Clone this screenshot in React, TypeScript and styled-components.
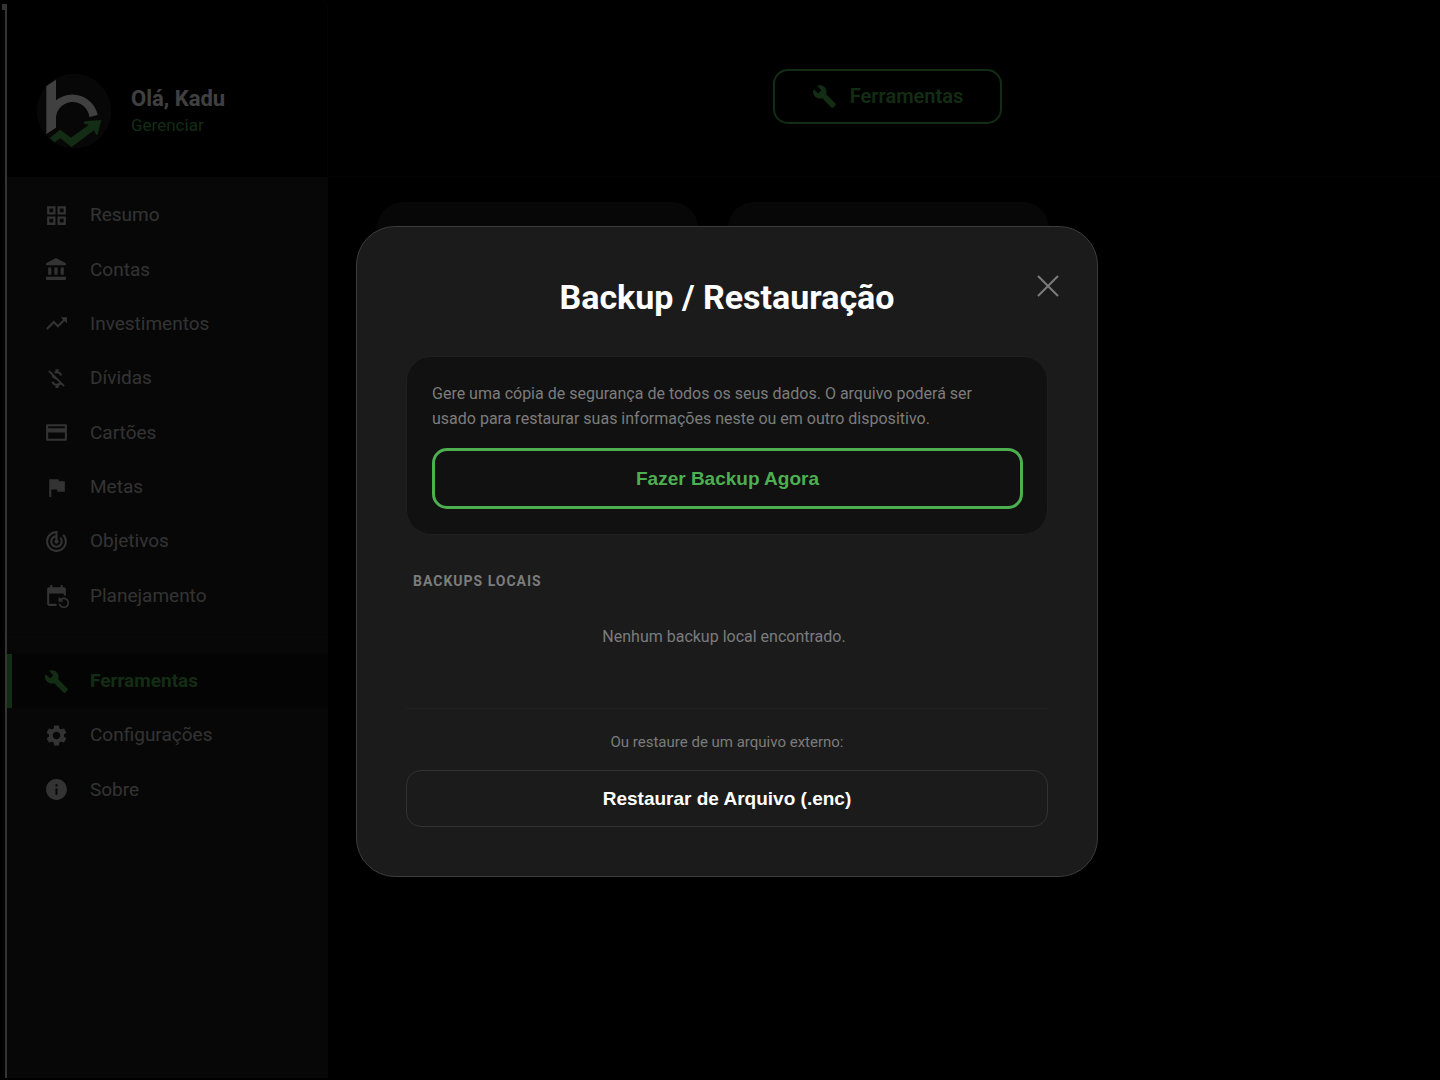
import React from "react";
import styled, { createGlobalStyle, css } from "styled-components";
import {
  MdBuild,
  MdEventRepeat,
  MdFlag,
  MdInfo,
  MdMoneyOff,
  MdSettings,
  MdTrackChanges,
  MdTrendingUp,
} from "react-icons/md";

const color = {
  page: "#000000",
  panel: "#1c1c1c",
  inset: "#111111",
  text: "#ffffff",
  muted: "#cacaca",
  hint: "#7c7c7c",
  accent: "#4caf50",
};

const GlobalStyle = createGlobalStyle`
  *, *::before, *::after { box-sizing: border-box; }
  body {
    margin: 0;
    background: ${color.page};
    color: ${color.text};
    font-family: Roboto, "Liberation Sans", sans-serif;
    overflow: hidden;
  }
  h1, h2, h3, p, ul { margin: 0; padding: 0; }
  ul { list-style: none; }
  button { font: inherit; color: inherit; cursor: pointer; }
`;

const Shell = styled.div`
  display: flex;
  height: 100vh;
  padding: 4px 0 2px 2px;
  overflow: hidden;
`;

const Rail = styled.div`
  flex: none;
  width: 5px;
  background: #0c0c0c;
  border-right: 2px solid #d0d0d0;

  &::before {
    content: "";
    display: block;
    height: 6px;
    background: #d0d0d0;
  }
`;

const AppFrame = styled.div`
  flex: none;
  width: 100vw;
  display: grid;
  grid-template-columns: 321px 1fr;
`;

const Sidebar = styled.aside`
  display: flex;
  flex-direction: column;
  background: ${color.panel};
`;

const Profile = styled.div`
  display: flex;
  align-items: center;
  gap: 20px;
  height: 173px;
  padding: 41px 30px 0;
  background: ${color.page};
  border-right: 1px solid ${color.inset};
`;

const Avatar = styled.svg`
  flex: none;
  width: 74px;
  height: 74px;
`;

const ProfileName = styled.h3`
  font-size: 22px;
  line-height: 28px;
  font-weight: 700;
`;

const ProfileLink = styled.a`
  display: block;
  font-size: 17px;
  line-height: 24px;
  color: ${color.accent};
  text-decoration: none;
`;

const Nav = styled.nav`
  padding: 11px 0;
`;

const NavList = styled.ul<{ $height: number }>`
  display: grid;
  grid-auto-rows: 1fr;
  min-height: ${(p) => p.$height}px;
`;

const NavDivider = styled.hr`
  height: 1px;
  margin: 14px 0 16px;
  border: 0;
  background: #242424;
`;

const NavLink = styled.a<{ $active?: boolean }>`
  display: flex;
  align-items: center;
  gap: 21px;
  height: 100%;
  padding: 0 32px;
  border-left: 5px solid transparent;
  font-size: 19px;
  line-height: 24px;
  color: ${color.muted};
  text-decoration: none;

  svg {
    flex: none;
    font-size: 25px;
  }

  ${(p) =>
    p.$active &&
    css`
      border-left-color: ${color.accent};
      background: ${color.inset};
      color: ${color.accent};
      font-weight: 700;
    `}
`;

const Main = styled.main`
  display: flex;
  flex-direction: column;
`;

const TopBar = styled.header`
  display: flex;
  align-items: center;
  justify-content: center;
  height: 173px;
  padding-top: 12px;
  border-bottom: 1px solid #080808;
`;

const PageTab = styled.button`
  display: flex;
  align-items: center;
  gap: 13px;
  height: 55px;
  padding: 0 37px;
  border: 2px solid ${color.accent};
  border-radius: 15px;
  background: none;
  color: ${color.accent};
  font-size: 20px;
  line-height: 24px;
  font-weight: 600;

  svg {
    font-size: 25px;
  }
`;

const ToolGrid = styled.div`
  display: grid;
  grid-template-columns: repeat(2, 321px);
  gap: 30px;
  padding: 25px 49px;
`;

const ToolCard = styled.div`
  min-height: 180px;
  border-radius: 26px;
  background: ${color.panel};
`;

const Backdrop = styled.div`
  position: fixed;
  inset: 0;
  display: grid;
  place-items: center;
  padding: 23px 0 0 14px;
  background: rgba(0, 0, 0, 0.75);
`;

const Dialog = styled.section`
  position: relative;
  width: 742px;
  max-width: 100%;
  padding: 48px 49px 49px;
  border: 1px solid #3c3c3c;
  border-radius: 39px;
  background: #1b1b1b;
`;

const DialogTitle = styled.h1`
  margin-bottom: 37px;
  font-size: 34px;
  line-height: 44px;
  font-weight: 700;
  text-align: center;
`;

const CloseButton = styled.button`
  position: absolute;
  top: 42px;
  right: 32px;
  display: grid;
  place-items: center;
  width: 34px;
  height: 34px;
  padding: 0;
  border: 0;
  background: none;
  color: ${color.hint};
`;

const BackupCard = styled.div`
  padding: 24px 24px 25px 25px;
  border: 1px solid #1f1f1f;
  border-radius: 25px;
  background: ${color.inset};
`;

const Description = styled.p`
  margin-bottom: 17px;
  padding-right: 24px;
  font-size: 16px;
  line-height: 25px;
  color: ${color.hint};
`;

const ActionButton = styled.button<{ $primary?: boolean }>`
  display: block;
  width: 100%;
  padding: 16px;
  border: 1px solid #333333;
  border-radius: 15px;
  background: none;
  font-family: "Liberation Sans", Arial, sans-serif;
  font-size: 19px;
  line-height: 23px;
  font-weight: 700;

  ${(p) =>
    p.$primary &&
    css`
      border: 3px solid ${color.accent};
      color: ${color.accent};
    `}
`;

const SectionLabel = styled.h2`
  margin: 37px 7px 35px;
  font-size: 14px;
  line-height: 18px;
  font-weight: 700;
  letter-spacing: 1px;
  text-transform: uppercase;
  color: ${color.hint};
`;

const EmptyList = styled.p`
  padding-right: 6px;
  font-size: 16px;
  line-height: 24px;
  text-align: center;
  color: ${color.hint};
`;

const RestoreArea = styled.div`
  margin-top: 59px;
  padding-top: 23px;
  border-top: 1px solid #202020;
`;

const RestoreHint = styled.p`
  margin-bottom: 18px;
  font-size: 15px;
  line-height: 20px;
  text-align: center;
  color: ${color.hint};
`;

type NavItem = { label: string; icon: React.ComponentType; active?: boolean };

function GlyphIcon({ d }: { d: string }) {
  return (
    <svg width="1em" height="1em" viewBox="0 0 24 24" fill="currentColor" aria-hidden="true">
      <path fillRule="evenodd" d={d} />
    </svg>
  );
}

const GridIcon = () => (
  <GlyphIcon d="M3 3h8v8H3zM5.200 5.200v3.600h3.600V5.200zM13 3h8v8h-8zM15.200 5.200v3.600h3.600V5.200zM3 13h8v8H3zM5.200 15.200v3.600h3.600v-3.600zM13 13h8v8h-8zM15.200 15.200v3.600h3.600v-3.600z" />
);

const BankIcon = () => (
  <GlyphIcon d="M4 10v7h3v-7H4zm6 0v7h3v-7h-3zM2 22h19v-3H2v3zm14-12v7h3v-7h-3zm-4.5-9L2 6v2h19V6l-9.5-5z" />
);

const CardIcon = () => (
  <GlyphIcon d="M3 4h18a1 1 0 0 1 1 1v14a1 1 0 0 1-1 1H3a1 1 0 0 1-1-1V5a1 1 0 0 1 1-1zM4 6v2h16V6zM4 12v6h16v-6z" />
);

const mainItems: NavItem[] = [
  { label: "Resumo", icon: GridIcon },
  { label: "Contas", icon: BankIcon },
  { label: "Investimentos", icon: MdTrendingUp },
  { label: "Dívidas", icon: MdMoneyOff },
  { label: "Cartões", icon: CardIcon },
  { label: "Metas", icon: MdFlag },
  { label: "Objetivos", icon: MdTrackChanges },
  { label: "Planejamento", icon: MdEventRepeat },
];

const systemItems: NavItem[] = [
  { label: "Ferramentas", icon: MdBuild, active: true },
  { label: "Configurações", icon: MdSettings },
  { label: "Sobre", icon: MdInfo },
];

function Logo() {
  return (
    <Avatar viewBox="20 29 222 222" aria-hidden="true">
      <circle cx="131" cy="140" r="110" fill="#1e1e1e" stroke="#2a2a2a" strokeWidth="2" />
      <path
        fill="#ffffff"
        d="M48 65L77 46V108A78 78 0 0 1 202 152L177 158A50 50 0 0 0 77 168V190L48 209Z"
      />
      <path
        fill={color.accent}
        d="M58 222L89 196L122 220L176 181L160 178L163 171L213 167L202 210L198 212L191 198L124 248L90 222L73 234Z"
      />
    </Avatar>
  );
}

function NavGroup({ items, height }: { items: NavItem[]; height: number }) {
  return (
    <NavList $height={height}>
      {items.map(({ label, icon: Icon, active }) => (
        <li key={label}>
          <NavLink href="#" $active={active} aria-current={active ? "page" : undefined}>
            <Icon />
            {label}
          </NavLink>
        </li>
      ))}
    </NavList>
  );
}

export default function App() {
  return (
    <>
      <GlobalStyle />
      <Shell>
        <Rail />
        <AppFrame>
          <Sidebar>
            <Profile>
              <Logo />
              <div>
                <ProfileName>Olá, Kadu</ProfileName>
                <ProfileLink href="#">Gerenciar</ProfileLink>
              </div>
            </Profile>
            <Nav>
              <NavGroup items={mainItems} height={435} />
              <NavDivider />
              <NavGroup items={systemItems} height={163} />
            </Nav>
          </Sidebar>
          <Main>
            <TopBar>
              <PageTab type="button">
                <MdBuild aria-hidden="true" />
                Ferramentas
              </PageTab>
            </TopBar>
            <ToolGrid>
              <ToolCard />
              <ToolCard />
            </ToolGrid>
          </Main>
        </AppFrame>
      </Shell>
      <Backdrop>
        <Dialog role="dialog" aria-modal="true" aria-labelledby="backup-title">
          <DialogTitle id="backup-title">Backup / Restauração</DialogTitle>
          <CloseButton type="button" aria-label="Fechar">
            <svg width="22" height="22" viewBox="0 0 22 22" aria-hidden="true">
              <path d="M1 1L21 21M21 1L1 21" stroke="currentColor" strokeWidth="2" />
            </svg>
          </CloseButton>
          <BackupCard>
            <Description>
              Gere uma cópia de segurança de todos os seus dados. O arquivo poderá ser usado para
              restaurar suas informações neste ou em outro dispositivo.
            </Description>
            <ActionButton type="button" $primary>
              Fazer Backup Agora
            </ActionButton>
          </BackupCard>
          <SectionLabel>Backups Locais</SectionLabel>
          <EmptyList>Nenhum backup local encontrado.</EmptyList>
          <RestoreArea>
            <RestoreHint>Ou restaure de um arquivo externo:</RestoreHint>
            <ActionButton type="button">Restaurar de Arquivo (.enc)</ActionButton>
          </RestoreArea>
        </Dialog>
      </Backdrop>
    </>
  );
}
